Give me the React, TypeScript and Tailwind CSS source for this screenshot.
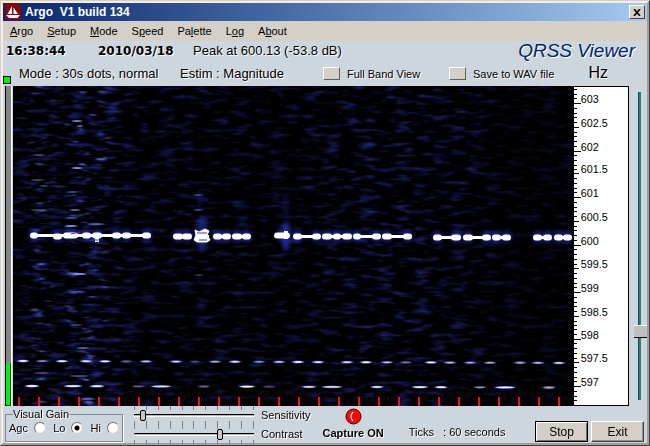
import { useState } from "react";

const menuItems = [
  { before: "", key: "A", after: "rgo" },
  { before: "", key: "S", after: "etup" },
  { before: "", key: "M", after: "ode" },
  { before: "S", key: "p", after: "eed" },
  { before: "Pa", key: "l", after: "ette" },
  { before: "L", key: "o", after: "g" },
  { before: "A", key: "b", after: "out" },
];

// keyed carrier around 600 Hz: [start, end, y]
const dashes = [
  [20, 22, 149], [43, 46, 150], [53, 62, 149], [72, 75, 149], [82, 86, 149],
  [102, 105, 149], [112, 115, 149], [132, 135, 149], [163, 167, 150], [172, 176, 150],
  [203, 206, 150], [212, 215, 150], [222, 226, 150], [232, 235, 150], [264, 274, 149],
  [283, 286, 150], [302, 305, 150], [312, 316, 150], [323, 325, 150], [332, 336, 150],
  [343, 345, 150], [362, 365, 150], [372, 376, 150], [393, 396, 150], [423, 426, 151],
  [441, 445, 151], [453, 457, 151], [472, 475, 151], [482, 485, 151], [492, 495, 151],
  [523, 526, 151], [533, 536, 151], [544, 547, 151], [553, 556, 151],
];

// thin joins between the blobs above: [start, end, y]
const joins = [
  [22, 44, 149.5], [44, 74, 149.5], [74, 135, 149.5], [164, 175, 150.5], [189, 196, 150.5],
  [204, 215, 150.5], [223, 235, 150.5], [284, 305, 150.5], [314, 336, 150.5],
  [343, 365, 150.5], [373, 396, 150.5], [424, 445, 151.5], [454, 475, 151.5],
  [483, 495, 151.5], [524, 536, 151.5], [545, 556, 151.5],
];

// weak dots at 597.5 Hz: [x, brightness]
const dots = [
  [10, 1], [29, 0.6], [49, 1], [73, 0.9], [92, 1], [113, 0.4], [133, 0.8],
  [163, 0.9], [182, 0.3], [202, 0.7], [222, 0.9], [246, 0.6], [266, 0.8],
  [285, 1], [305, 1], [334, 0.9], [353, 1], [374, 0.8], [393, 0.5],
  [418, 1], [437, 0.8], [457, 0.7], [477, 0.7], [507, 0.7], [525, 0.8], [546, 0.9],
];

// second station at 597 Hz: [x, half width, brightness]
const lower = [
  [19, 6, 1], [60, 8, 1], [84, 6, 1], [125, 5, 0.4], [148, 9, 0.9],
  [191, 5, 0.4], [234, 7, 1], [256, 5, 0.3], [296, 6, 0.9], [319, 9, 0.9],
  [364, 5, 0.9], [407, 7, 1], [428, 5, 1], [467, 5, 0.6], [492, 9, 1], [536, 5, 0.7],
];

// stray bursts: [x, y, half width, brightness]
const bursts = [
  [64, 35, 5, 0.8], [67, 40, 3, 0.7], [64, 82, 5, 0.9], [88, 73, 5, 0.5],
  [62, 124, 5, 0.6], [58, 140, 6, 0.9], [62, 188, 4, 0.6], [67, 188, 6, 0.9],
  [26, 69, 6, 0.4], [24, 94, 6, 0.4], [31, 100, 4, 0.4], [59, 106, 6, 0.4],
  [84, 138, 7, 0.5], [185, 109, 4, 0.4], [185, 124, 4, 0.4], [186, 189, 4, 0.3],
  [58, 132, 6, 0.4], [28, 178, 4, 0.5], [26, 124, 8, 0.4], [70, 262, 6, 0.6],
  [66, 290, 9, 0.5], [75, 313, 7, 0.5], [28, 287, 7, 0.4], [63, 239, 6, 0.4],
];

function Boat() {
  return (
    <svg viewBox="0 0 16 16" className="size-4 shrink-0" aria-hidden="true">
      <rect width="16" height="16" rx="1" fill="#7c0b12" />
      <path d="M7 2v8H2.500zM8.500 3.500l4.500 6.500H8.500z" fill="#fff" />
      <path d="M1 11h14l-2.500 3H4z" fill="#fff" />
    </svg>
  );
}

function Waterfall() {
  return (
    <svg
      viewBox="0 0 561 320"
      preserveAspectRatio="none"
      className="block h-full w-full"
      role="img"
      aria-label="Spectrum waterfall"
    >
      <defs>
        <filter id="noise" x="0" y="0" width="100%" height="100%" colorInterpolationFilters="sRGB">
          <feTurbulence type="fractalNoise" baseFrequency="0.055 0.21" numOctaves="2" seed="7" />
          <feColorMatrix values="0 0.5 0 0 -0.26  0 0.5 0 0 -0.25  0 1.5 0 0 -0.72  0 0 0 0 1" />
        </filter>
        <filter id="strong" x="0" y="0" width="100%" height="100%" colorInterpolationFilters="sRGB">
          <feTurbulence type="fractalNoise" baseFrequency="0.06 0.22" numOctaves="2" seed="23" />
          <feColorMatrix values="0 1.6 0 0 -0.82  0 1.6 0 0 -0.78  0 3 0 0 -1.3  0 4 0 0 -2.2" />
        </filter>
        <filter id="glow" x="-20%" y="-20%" width="140%" height="140%">
          <feGaussianBlur stdDeviation="2 2" />
        </filter>
        <filter id="soft" x="-20%" y="-20%" width="140%" height="140%">
          <feGaussianBlur stdDeviation="1.2 0.4" />
        </filter>
        <linearGradient id="shade">
          <stop offset="0" stopColor="#000" stopOpacity="0.4" />
          <stop offset="0.18" stopColor="#000" stopOpacity="0.2" />
          <stop offset="0.22" stopColor="#000" stopOpacity="0.5" />
          <stop offset="0.5" stopColor="#000" stopOpacity="0.55" />
          <stop offset="0.62" stopColor="#000" stopOpacity="0.3" />
          <stop offset="0.8" stopColor="#000" stopOpacity="0.4" />
          <stop offset="0.88" stopColor="#000" stopOpacity="0.7" />
          <stop offset="1" stopColor="#000" stopOpacity="0.7" />
        </linearGradient>
        <linearGradient id="bands">
          <stop offset="0" stopColor="#000" />
          <stop offset="0.02" stopColor="#222" />
          <stop offset="0.05" stopColor="#888" />
          <stop offset="0.08" stopColor="#222" />
          <stop offset="0.12" stopColor="#bbb" />
          <stop offset="0.165" stopColor="#555" />
          <stop offset="0.19" stopColor="#000" />
          <stop offset="1" stopColor="#000" />
        </linearGradient>
        <mask id="columns">
          <rect width="561" height="320" fill="url(#bands)" />
        </mask>
      </defs>
      <rect width="561" height="320" fill="#000006" />
      <rect width="561" height="320" filter="url(#noise)" />
      <rect width="561" height="320" fill="url(#shade)" />
      <g mask="url(#columns)">
        <rect width="561" height="320" filter="url(#strong)" />
      </g>

      <g filter="url(#glow)" fill="#2a32b0">
        {dashes.map(([a, b, y]) => (
          <ellipse key={a} cx={(a + b) / 2} cy={y} rx="5" ry="6" opacity="0.7" />
        ))}
        <ellipse cx="189" cy="148" rx="6" ry="18" opacity="0.6" />
        <ellipse cx="273" cy="150" rx="4" ry="15" opacity="0.9" />
        <ellipse cx="273" cy="118" rx="3" ry="12" opacity="0.3" />
        <ellipse cx="187" cy="112" rx="4" ry="8" opacity="0.3" />
      </g>

      <g filter="url(#soft)" fill="#8c98f0">
        {bursts.map(([x, y, r, o]) => (
          <ellipse key={`${x}-${y}`} cx={x} cy={y} rx={r} ry="1.1" opacity={o} />
        ))}
        {dots.map(([x, o], i) => (
          <g key={x} opacity={o}>
            <ellipse cx={x} cy={275 + i / 13} rx="6" ry="1.4" fill="#4a58d8" />
            <ellipse cx={x} cy={275 + i / 13} rx="4" ry="0.9" fill="#f4f4ff" />
          </g>
        ))}
        {lower.map(([x, r, o], i) => (
          <g key={x} opacity={o}>
            <ellipse cx={x} cy={300 + i / 10} rx={r + 1} ry="1.4" fill="#4a58d8" />
            <ellipse cx={x} cy={300 + i / 10} rx={r} ry="0.9" fill="#f4f4ff" />
          </g>
        ))}
      </g>

      <g fill="#fff" stroke="#fff">
        {joins.map(([a, b, y]) => (
          <path key={a} d={`M${a} ${y}H${b}`} strokeWidth="3" />
        ))}
        {dashes.map(([a, b, y]) => (
          <path key={a} d={`M${a} ${y + 0.5}H${b}`} strokeWidth="6" strokeLinecap="round" />
        ))}
        <path d="M182 144l4 2 6-3 4 2-2 4 3 5-3 2h-10l-3-2 2-5z" />
        <path d="M273 145v8M84 150v6" strokeWidth="4" />
      </g>
      <path d="M184 147h10M186 154h8M58 148l9-2M78 154h8" stroke="#3a3fa0" />

      {Array.from({ length: 28 }, (_, i) => (
        <rect key={i} x={5 + i * 20} y="311" width="2" height="9" fill="#f01010" />
      ))}
    </svg>
  );
}

function FrequencyScale() {
  const step = 23.75;
  return (
    <svg
      viewBox="0 0 55 320"
      className="block h-full w-[55px] shrink-0 border-t border-r border-b border-black bg-white"
      preserveAspectRatio="none"
      role="img"
      aria-label="Frequency in hertz"
    >
      <g fill="#000" shapeRendering="crispEdges">
        {Array.from({ length: 67 }, (_, i) => (
          <rect key={i} x="0" y={Math.round(16 + (i - 3) * (step / 5))} width="3" height="1" />
        ))}
        {Array.from({ length: 13 }, (_, i) => (
          <rect key={i} x="0" y={Math.round(16 + i * step)} width={i % 2 ? 5 : 7} height="1" />
        ))}
      </g>
      {Array.from({ length: 13 }, (_, i) => (
        <text key={i} x="7" y={Math.round(16 + i * step)} fontSize="11">
          {603 - i * 0.5}
        </text>
      ))}
    </svg>
  );
}

function TickRow() {
  return (
    <div className="flex h-1 justify-between">
      {Array.from({ length: 11 }, (_, i) => (
        <span key={i} className="w-px bg-[#7f8488]" />
      ))}
    </div>
  );
}

function GainSlider({ id, start }: { id: string; start: number }) {
  const [value, setValue] = useState(start);
  return (
    <div className="w-30">
      <TickRow />
      <input
        id={id}
        type="range"
        value={value}
        onChange={(e) => setValue(Number(e.target.value))}
        className="block h-[11px] w-full appearance-none bg-transparent [&::-webkit-slider-runnable-track]:h-[3px] [&::-webkit-slider-runnable-track]:border-t [&::-webkit-slider-runnable-track]:border-b [&::-webkit-slider-runnable-track]:border-t-black [&::-webkit-slider-runnable-track]:border-b-white [&::-webkit-slider-runnable-track]:bg-[#b4b8ba] [&::-webkit-slider-thumb]:-mt-[5px] [&::-webkit-slider-thumb]:h-[11px] [&::-webkit-slider-thumb]:w-[6px] [&::-webkit-slider-thumb]:appearance-none [&::-webkit-slider-thumb]:rounded-xs [&::-webkit-slider-thumb]:border [&::-webkit-slider-thumb]:border-black [&::-webkit-slider-thumb]:bg-[#c8c8c8]"
      />
      <TickRow />
    </div>
  );
}

export default function App() {
  const [gain, setGain] = useState("Lo");
  const [offset, setOffset] = useState(21);

  return (
    <div className="flex min-h-screen w-full flex-col border border-t-[#d4d0c8] border-r-[#404040] border-b-[#404040] border-l-[#d4d0c8] bg-[#cdd6dd] font-['Liberation_Sans',Arial,sans-serif] text-[11px] leading-4 text-black">
      <div className="flex flex-1 flex-col border-2 border-t-[#f0eee8] border-r-[#a09e9a] border-b-[#a09e9a] border-l-[#f0eee8]">
        <header className="flex h-[18px] items-center gap-1 bg-linear-to-r from-[#0a246a] to-[#a6caf0] pr-0.5 pl-0.5">
          <Boat />
          <h1 className="flex-1 text-xs font-bold text-white">Argo&nbsp; V1 build 134</h1>
          <button
            aria-label="Close"
            className="flex h-3.5 w-4 items-center justify-center border border-t-white border-r-[#404040] border-b-[#404040] border-l-white bg-[#d4d0c8]"
          >
            <svg viewBox="0 0 8 7" className="h-[7px] w-2">
              <path d="M1 0l6 7M7 0L1 7" stroke="#000" strokeWidth="1.6" />
            </svg>
          </button>
        </header>

        <nav className="flex h-5 items-center gap-3.5 bg-[#d4d0c8] pl-[7px]">
          {menuItems.map((item) => (
            <button key={item.key}>
              {item.before}
              <span className="underline">{item.key}</span>
              {item.after}
            </button>
          ))}
        </nav>

        <section className="[text-shadow:1px_1px_0_#fff]">
          <div className="flex h-5 items-center pl-[3px] text-[13px]">
            <time className="w-[92px] font-['DejaVu_Sans',Verdana,sans-serif] text-xs font-bold">16:38:44</time>
            <time className="w-[95px] font-['DejaVu_Sans',Verdana,sans-serif] text-xs font-bold">2010/03/18</time>
            <p className="flex-1">Peak at 600.13 (-53.8 dB)</p>
            <p className="pr-3 text-[19px] leading-5 text-[#00246b] italic">QRSS Viewer</p>
          </div>
          <div className="flex h-[25px] items-center">
            <span className="mr-2 mb-0.5 size-2 self-end border border-black bg-[#00f000]" />
            <p className="w-[161px] text-[13px]">Mode : 30s dots, normal</p>
            <p className="w-[143px] text-[13px]">Estim : Magnitude</p>
            <button
              id="full-band"
              aria-labelledby="full-band-label"
              className="h-[13px] w-[17px] border border-t-white border-r-[#606060] border-b-[#606060] border-l-white bg-[#d4d0c8]"
            />
            <label id="full-band-label" htmlFor="full-band" className="w-[109px] pl-[7px]">Full Band View</label>
            <button
              id="save-wav"
              aria-labelledby="save-wav-label"
              className="h-[13px] w-[17px] border border-t-white border-r-[#606060] border-b-[#606060] border-l-white bg-[#d4d0c8]"
            />
            <label id="save-wav-label" htmlFor="save-wav" className="flex-1 pl-[7px]">Save to WAV file</label>
            <span className="self-start pr-[39px] text-base">Hz</span>
          </div>
        </section>

        <main className="flex h-80">
          <div className="mr-px ml-0.5 flex w-[7px] flex-col border-r border-l border-r-white border-l-black">
            <div className="flex-1 bg-[#858585]" />
            <div className="h-[43px] border-r border-b border-[#006000] bg-[#10e820]" />
          </div>
          <div className="min-w-0 flex-1">
            <Waterfall />
          </div>
          <FrequencyScale />
          <div className="flex w-[18px] justify-end py-1.5 pr-px">
            <input
              type="range"
              aria-label="Frequency offset"
              value={offset}
              onChange={(e) => setOffset(Number(e.target.value))}
              className="h-full w-[13px] appearance-none bg-transparent [direction:rtl] [writing-mode:vertical-lr] [&::-webkit-slider-runnable-track]:w-[3px] [&::-webkit-slider-runnable-track]:border-l [&::-webkit-slider-runnable-track]:border-l-[#104848] [&::-webkit-slider-runnable-track]:bg-[#2f8080] [&::-webkit-slider-thumb]:-ml-[5px] [&::-webkit-slider-thumb]:h-[13px] [&::-webkit-slider-thumb]:w-[13px] [&::-webkit-slider-thumb]:appearance-none [&::-webkit-slider-thumb]:border-t [&::-webkit-slider-thumb]:border-b [&::-webkit-slider-thumb]:border-t-white [&::-webkit-slider-thumb]:border-b-black [&::-webkit-slider-thumb]:bg-[#c0c0c0]"
            />
          </div>
        </main>

        <footer className="flex h-[37px] items-start pl-0.5">
          <fieldset className="h-9 w-[118px] border border-[#80868a] px-[3px] shadow-[1px_1px_0_#fff]">
            <legend className="ml-1 leading-4 [text-shadow:1px_1px_0_#fff]">Visual Gain</legend>
            <div className="-mt-0.5 flex justify-between [text-shadow:1px_1px_0_#fff]">
              {["Agc", "Lo", "Hi"].map((name) => (
                <label key={name} className="flex items-center gap-1.5">
                  {name}
                  <input
                    type="radio"
                    name="gain"
                    checked={gain === name}
                    onChange={() => setGain(name)}
                    className="size-3 appearance-none rounded-full border border-t-[#707070] border-r-[#d4d0c8] border-b-[#d4d0c8] border-l-[#707070] bg-white checked:bg-[radial-gradient(circle,#000_2px,#fff_3px)]"
                  />
                </label>
              ))}
            </div>
          </fieldset>

          <div className="ml-[11px] grid grid-cols-[auto_auto] gap-x-[7px] leading-[18px]">
            <GainSlider id="sensitivity" start={5} />
            <label htmlFor="sensitivity" className="[text-shadow:1px_1px_0_#fff]">Sensitivity</label>
            <GainSlider id="contrast" start={73} />
            <label htmlFor="contrast" className="[text-shadow:1px_1px_0_#fff]">Contrast</label>
          </div>

          <div className="ml-3 flex flex-col items-center pt-0.5">
            <svg viewBox="0 0 17 17" className="size-[17px]" aria-hidden="true">
              <circle cx="8.500" cy="8.500" r="7.500" fill="#f80808" stroke="#400" />
              <path d="M8 4q-4 4.500 0 9" fill="none" stroke="#fff" strokeWidth="1.2" />
            </svg>
            <p className="font-bold [text-shadow:1px_1px_0_#fff]">Capture ON</p>
          </div>
          <p className="ml-[25px] flex-1 pt-[18px] whitespace-pre [text-shadow:1px_1px_0_#fff]">Ticks   : 60 seconds</p>

          <div className="flex gap-[3px] pt-[15px] pr-[3px]">
            <button className="h-[21px] w-[53px] border border-black bg-[#d4d0c8] text-xs shadow-[inset_1px_1px_0_#fff,inset_-1px_-1px_0_#707070]">
              Stop
            </button>
            <button className="h-[21px] w-[53px] border border-t-white border-r-[#404040] border-b-[#404040] border-l-white bg-[#d4d0c8] text-xs shadow-[inset_-1px_-1px_0_#909090]">
              Exit
            </button>
          </div>
        </footer>
      </div>
    </div>
  );
}
